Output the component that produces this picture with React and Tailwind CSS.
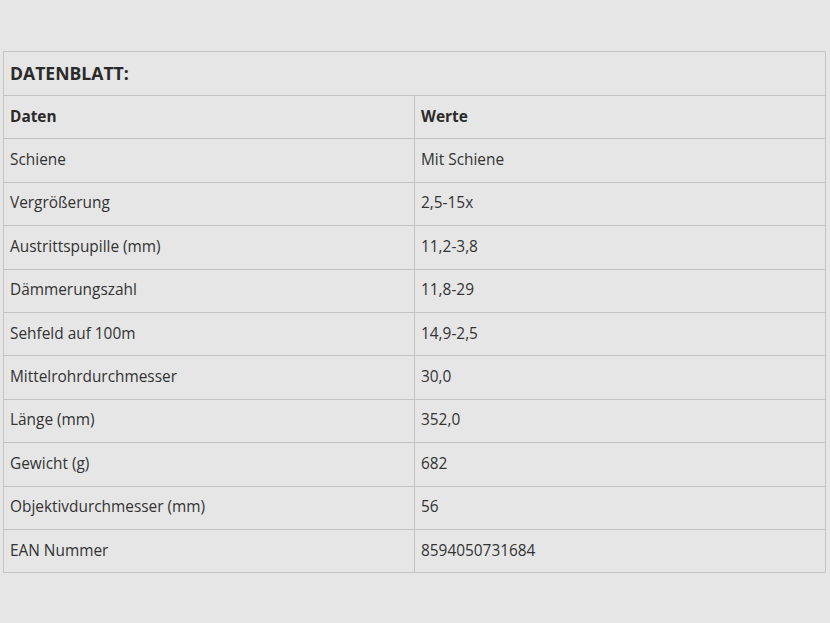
import React from 'react'

const rows = [
    ['Schiene', 'Mit Schiene'],
    ['Vergrößerung', '2,5-15x'],
    ['Austrittspupille (mm)', '11,2-3,8'],
    ['Dämmerungszahl', '11,8-29'],
    ['Sehfeld auf 100m', '14,9-2,5'],
    ['Mittelrohrdurchmesser', '30,0'],
    ['Länge (mm)', '352,0'],
    ['Gewicht (g)', '682'],
    ['Objektivdurchmesser (mm)', '56'],
    ['EAN Nummer', '8594050731684'],
]

function App() {
    return (
        <div className="min-h-[623px] w-full bg-[#e6e6e6] pt-[51px] pl-[3px] pr-[4px]" style={{ fontFamily: '"Open Sans", "Liberation Sans", sans-serif' }}>
            <table className="w-[823px] border-collapse text-[15.4px] text-[#333333]">
                <thead>
                    <tr className="h-[44px]">
                        <th colSpan={2} className="border border-[#c3c3c3] px-[6px] pb-[1px] text-left text-[17.6px] font-bold text-[#2a2a2a]">
                            DATENBLATT:
                        </th>
                    </tr>
                    <tr className="h-[43.4px]">
                        <th className="w-[411px] border border-[#c3c3c3] px-[6px] pb-[2px] text-left font-bold text-[#2a2a2a]">Daten</th>
                        <th className="border border-[#c3c3c3] px-[6px] pb-[2px] text-left font-bold text-[#2a2a2a]">Werte</th>
                    </tr>
                </thead>
                <tbody>
                    {rows.map(([label, value], index) => (
                        <tr key={index} className="h-[43.4px]">
                            <td className="border border-[#c3c3c3] px-[6px] pb-[2px]">{label}</td>
                            <td className="border border-[#c3c3c3] px-[6px] pb-[2px]">{value}</td>
                        </tr>
                    ))}
                </tbody>
            </table>
        </div>
    )
}

export default App
